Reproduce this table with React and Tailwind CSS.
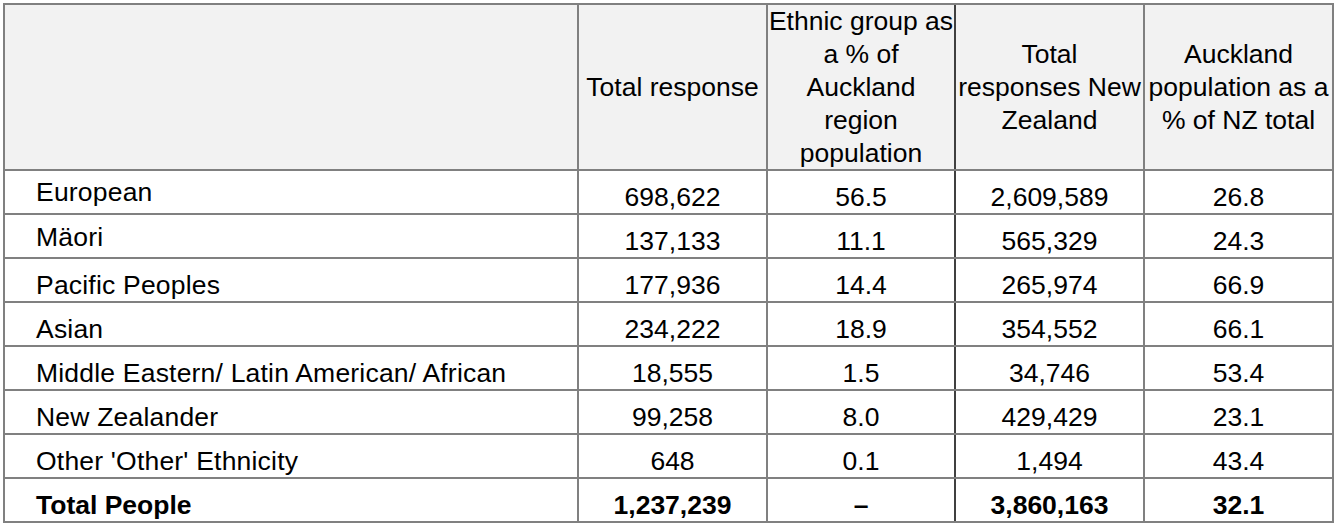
const rows = [
  { label: 'European', pad: 'pt-[6px]', cells: ['698,622', '56.5', '2,609,589', '26.8'] },
  { label: 'Mäori', pad: 'pt-[7px]', cells: ['137,133', '11.1', '565,329', '24.3'] },
  { label: 'Pacific Peoples', pad: 'pt-[11px]', cells: ['177,936', '14.4', '265,974', '66.9'] },
  { label: 'Asian', pad: 'pt-[11px]', cells: ['234,222', '18.9', '354,552', '66.1'] },
  { label: 'Middle Eastern/ Latin American/ African', pad: 'pt-[11px]', cells: ['18,555', '1.5', '34,746', '53.4'] },
  { label: 'New Zealander', pad: 'pt-[11px]', cells: ['99,258', '8.0', '429,429', '23.1'] },
  { label: "Other 'Other' Ethnicity", pad: 'pt-[11px]', cells: ['648', '0.1', '1,494', '43.4'] },
]

const total = { label: 'Total People', cells: ['1,237,239', '–', '3,860,163', '32.1'] }

function HeadCell({ children, dark }) {
  return (
    <div
      className={`bg-[#f2f2f2] flex items-center justify-center text-center leading-[33px] whitespace-nowrap ${dark ? 'shadow-[2px_0_0_#404040]' : ''}`}
    >
      <div>{children}</div>
    </div>
  )
}

export default function App() {
  return (
    <div className="min-h-screen bg-white font-['Liberation_Sans',Arial,sans-serif] text-[26.5px] text-black">
      <div className="pt-[3px] pl-[3px]">
        <div className="inline-grid grid-cols-[572px_187px_186px_187px_187px] grid-rows-[164px_repeat(8,42px)] gap-[2px] p-[2px] bg-[#808080]">
          {/* header */}
          <div className="bg-[#f2f2f2]" />
          <HeadCell>Total response</HeadCell>
          <HeadCell dark>
            Ethnic group as
            <br />a % of
            <br />Auckland
            <br />region
            <br />population
          </HeadCell>
          <HeadCell>
            Total
            <br />responses New
            <br />Zealand
          </HeadCell>
          <HeadCell>
            Auckland
            <br />population as a
            <br />% of NZ total
          </HeadCell>

          {/* body */}
          {rows.map((r) => (
            <Row key={r.label} r={r} />
          ))}

          <div className="bg-white pl-[31px] pt-[11px] leading-[30px] font-bold whitespace-nowrap">{total.label}</div>
          {total.cells.map((c, i) => (
            <div
              key={i}
              className={`bg-white pt-[11px] leading-[30px] text-center font-bold ${i === 1 ? 'shadow-[2px_0_0_#404040]' : ''}`}
            >
              {c}
            </div>
          ))}
        </div>
      </div>
    </div>
  )
}

function Row({ r }) {
  return (
    <>
      <div className={`bg-white pl-[31px] leading-[30px] whitespace-nowrap tracking-[0.2px] ${r.pad}`}>{r.label}</div>
      {r.cells.map((c, i) => (
        <div
          key={i}
          className={`bg-white pt-[11px] leading-[30px] text-center ${i === 1 ? 'shadow-[2px_0_0_#404040]' : ''}`}
        >
          {c}
        </div>
      ))}
    </>
  )
}
